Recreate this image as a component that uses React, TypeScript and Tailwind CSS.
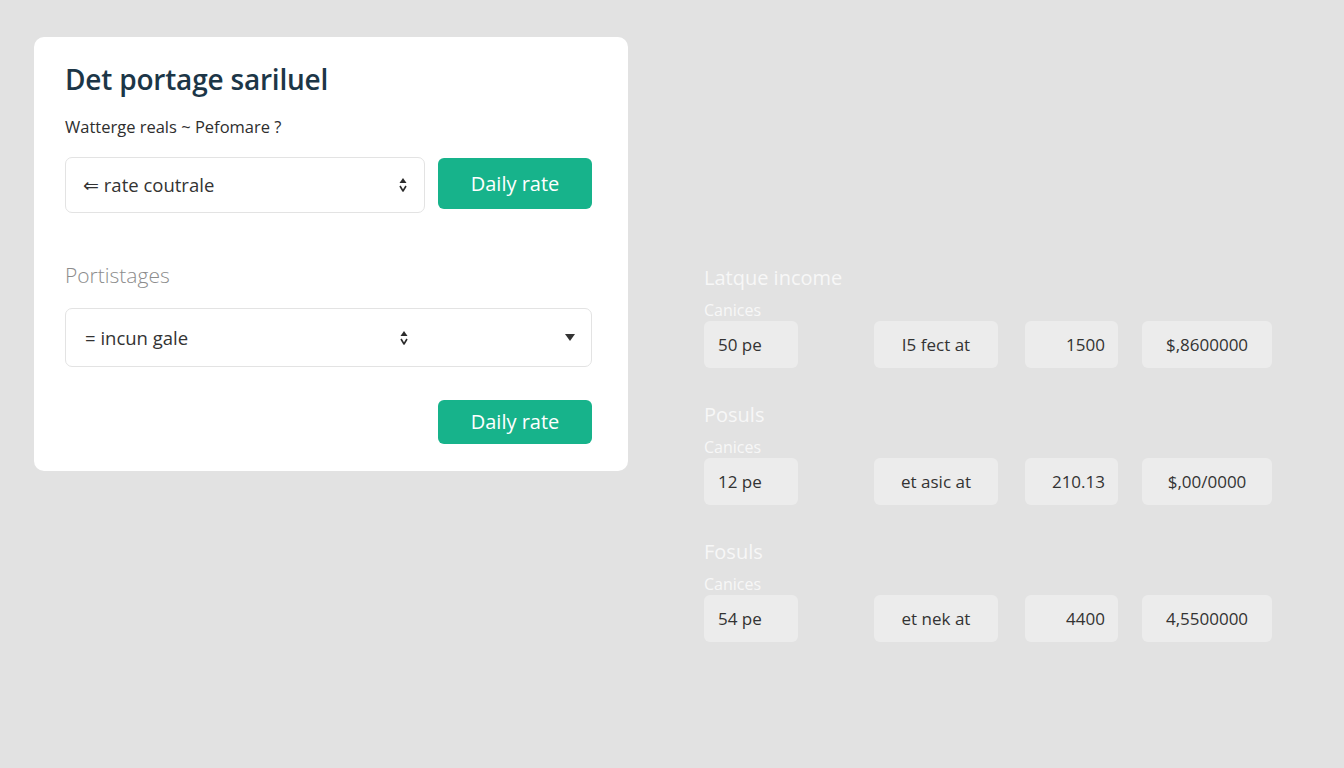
import React from 'react';

const rows = [
  { title: 'Latque income', cells: ['50 pe', 'I5 fect at', '1500', '$,8600000'] },
  { title: 'Posuls', cells: ['12 pe', 'et asic at', '210.13', '$,00/0000'] },
  { title: 'Fosuls', cells: ['54 pe', 'et nek at', '4400', '4,5500000'] },
];

const Spinner: React.FC = () => (
  <svg width="10" height="16" viewBox="0 0 10 16" className="shrink-0">
    <path d="M5 1 L8.5 6 L1.5 6 Z" fill="#2b2b2b" />
    <path d="M2 9 L5 14 L8 9" fill="none" stroke="#2b2b2b" strokeWidth="1.6" strokeLinejoin="round" />
  </svg>
);

const App: React.FC = () => {
  return (
    <div className="min-h-screen w-full bg-[#e2e2e2] flex items-start pl-[34px] pt-[37px]" style={{ fontFamily: '"Open Sans", "Liberation Sans", sans-serif' }}>
      {/* Left card */}
      <div className="w-[594px] bg-white rounded-[10px] pl-[31px] pr-[36px] pt-[25px] pb-[27px] flex flex-col">
        <h1 className="text-[28px] leading-[34px] font-semibold text-[#1c3647] tracking-[-0.2px]">Det portage sariluel</h1>
        <p className="mt-[19px] text-[16.5px] leading-6 text-[#2e2e2e]">Watterge reals ~ Pefomare ?</p>

        <div className="mt-[18px] flex items-start gap-[13px]">
          <div className="w-[360px] h-[56px] border border-[#e3e3e3] rounded-[7px] flex items-center pl-[17px] pr-[16px]">
            <span className="text-[18.5px] text-[#333]">⇐ rate coutrale</span>
            <span className="ml-auto"><Spinner /></span>
          </div>
          <button className="mt-px w-[154px] h-[51px] rounded-[6px] bg-[#17b38b] text-white text-[20px]">Daily rate</button>
        </div>

        <p className="mt-[48px] text-[21px] leading-7 text-[#8c8c8c] font-light">Portistages</p>

        <div className="mt-[19px] h-[59px] border border-[#e3e3e3] rounded-[7px] flex items-center pl-[19px] pr-[16px]">
          <span className="text-[18.5px] text-[#333] w-[314px]">= incun gale</span>
          <Spinner />
          <svg width="10" height="7" viewBox="0 0 10 7" className="ml-auto">
            <path d="M0 0 L10 0 L5 7 Z" fill="#333" />
          </svg>
        </div>

        <div className="mt-[33px] flex justify-end">
          <button className="w-[154px] h-[44px] rounded-[6px] bg-[#17b38b] text-white text-[20px]">Daily rate</button>
        </div>
      </div>

      {/* Right column */}
      <div className="ml-[76px] mt-[227px] flex flex-col gap-[33px]">
        {rows.map((r) => (
          <div key={r.title} className="flex flex-col">
            <h2 className="text-[20px] leading-7 text-[#f7f7f7]">{r.title}</h2>
            <p className="mt-2 text-[16px] leading-5 text-[#f7f7f7]">Canices</p>
            <div className="mt-px flex items-center">
              <div className="w-[94px] h-[47px] rounded-[6px] bg-[#ececec] flex items-center pl-[14px] text-[17px] text-[#333]">{r.cells[0]}</div>
              <div className="ml-[76px] w-[124px] h-[47px] rounded-[6px] bg-[#ececec] flex items-center justify-center text-[17px] text-[#333]">{r.cells[1]}</div>
              <div className="ml-[27px] w-[93px] h-[47px] rounded-[6px] bg-[#ececec] flex items-center justify-end pr-[13px] text-[17px] text-[#333]">{r.cells[2]}</div>
              <div className="ml-[24px] w-[130px] h-[47px] rounded-[6px] bg-[#ececec] flex items-center justify-center text-[17px] text-[#333]">{r.cells[3]}</div>
            </div>
          </div>
        ))}
      </div>
    </div>
  );
};

export default App;
